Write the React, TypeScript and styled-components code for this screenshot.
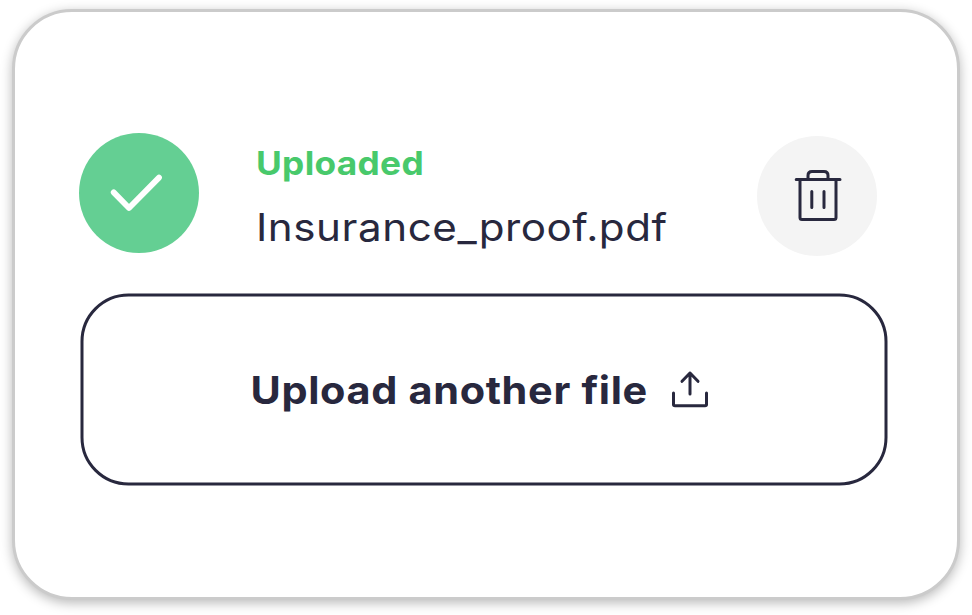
import React from "react";
import styled, { createGlobalStyle } from "styled-components";

const GlobalStyle = createGlobalStyle`
  * { box-sizing: border-box; }
  body { margin: 0; background: #fff; overflow: hidden; }
`;

const ink = "#28283e";

const Page = styled.main`
  width: 972px;
  height: 615px;
  padding: 9px 12px 15px;
  font-family: Inter, "Liberation Sans", sans-serif;
  color: ${ink};
`;

const Card = styled.section`
  width: 948px;
  height: 591px;
  padding: 121px 67px 0 64px;
  border: 3px solid #cbcbcb;
  border-radius: 60px;
  background: #fff;
  box-shadow: 0 3px 12px rgba(0, 0, 0, 0.28);
`;

const FileRow = styled.div`
  display: flex;
  align-items: flex-start;
  height: 161px;
`;

const StatusBadge = styled.div`
  flex: none;
  width: 120px;
  height: 120px;
  border-radius: 50%;
  background: #64cf93;
`;

const DeleteButton = styled.button`
  flex: none;
  width: 120px;
  height: 120px;
  margin: 3px 13px 0 auto;
  padding: 0;
  border: 0;
  border-radius: 50%;
  background: #f4f4f4;
  color: ${ink};
`;

const FileInfo = styled.div`
  display: flex;
  flex-direction: column;
  align-items: flex-start;
  margin-left: 56.5px;
  white-space: nowrap;
`;

const WideText = styled.span<{ $stretch: number }>`
  transform: scaleX(${(p) => p.$stretch});
  transform-origin: left center;
`;

const Status = styled(WideText)`
  margin-top: 10px;
  font-size: 33px;
  font-weight: 700;
  line-height: 40px;
  letter-spacing: 0.3px;
  color: #48c96b;
`;

const FileName = styled(WideText)`
  margin-top: 20px;
  font-size: 38.5px;
  font-weight: 400;
  line-height: 48px;
  letter-spacing: 0.5px;
`;

const UploadButton = styled.button`
  display: flex;
  align-items: center;
  width: 807px;
  height: 192px;
  margin-left: 2px;
  padding: 0 0 0 167px;
  border: 3px solid ${ink};
  border-radius: 48px;
  background: #fff;
  color: ${ink};
  font: inherit;
  transform: translate(-0.5px, -0.5px);
`;

const ButtonLabel = styled(WideText)`
  width: 420.5px;
  text-align: left;
  font-size: 38px;
  font-weight: 700;
  line-height: 48px;
  letter-spacing: 0.6px;
  white-space: nowrap;
`;

const Icon = styled.svg<{ $weight?: number }>`
  display: block;
  flex: none;
  fill: none;
  stroke: currentColor;
  stroke-width: ${(p) => p.$weight ?? 3};
  stroke-linecap: round;
  stroke-linejoin: round;
`;

const CheckIcon = styled(Icon)`
  color: #fff;
`;

export default function App() {
  return (
    <>
      <GlobalStyle />
      <Page>
        <Card>
          <FileRow>
            <StatusBadge>
              <CheckIcon $weight={5.8} width="120" height="120" viewBox="0 0 120 120">
                <path d="M34.7 59.4 50 75 80 44.6" />
              </CheckIcon>
            </StatusBadge>
            <FileInfo>
              <Status $stretch={1.068}>Uploaded</Status>
              <FileName $stretch={1.095}>Insurance_proof.pdf</FileName>
            </FileInfo>
            <DeleteButton aria-label="Delete file">
              <Icon width="120" height="120" viewBox="0 0 120 120">
                <path d="M39.2 43.5H83M43 43.5V81.5Q43 83.5 45 83.5H77Q79 83.5 79 81.5V43.5M51 43V39.5Q51 35.5 55 35.5H67Q71 35.5 71 39.5V43M54.8 55.5V71.5M67 55.5V71.5" />
              </Icon>
            </DeleteButton>
          </FileRow>
          <UploadButton>
            <ButtonLabel $stretch={1.09}>Upload another file</ButtonLabel>
            <Icon width="38" height="38" viewBox="0 0 38 38">
              <path d="M2 22.5V34Q2 35.3 3.5 35.3H33.5Q35 35.3 35 34V22.5M18.5 23.5V2.5M10.5 10.8 18.5 2.5 26.5 10.8" />
            </Icon>
          </UploadButton>
        </Card>
      </Page>
    </>
  );
}
